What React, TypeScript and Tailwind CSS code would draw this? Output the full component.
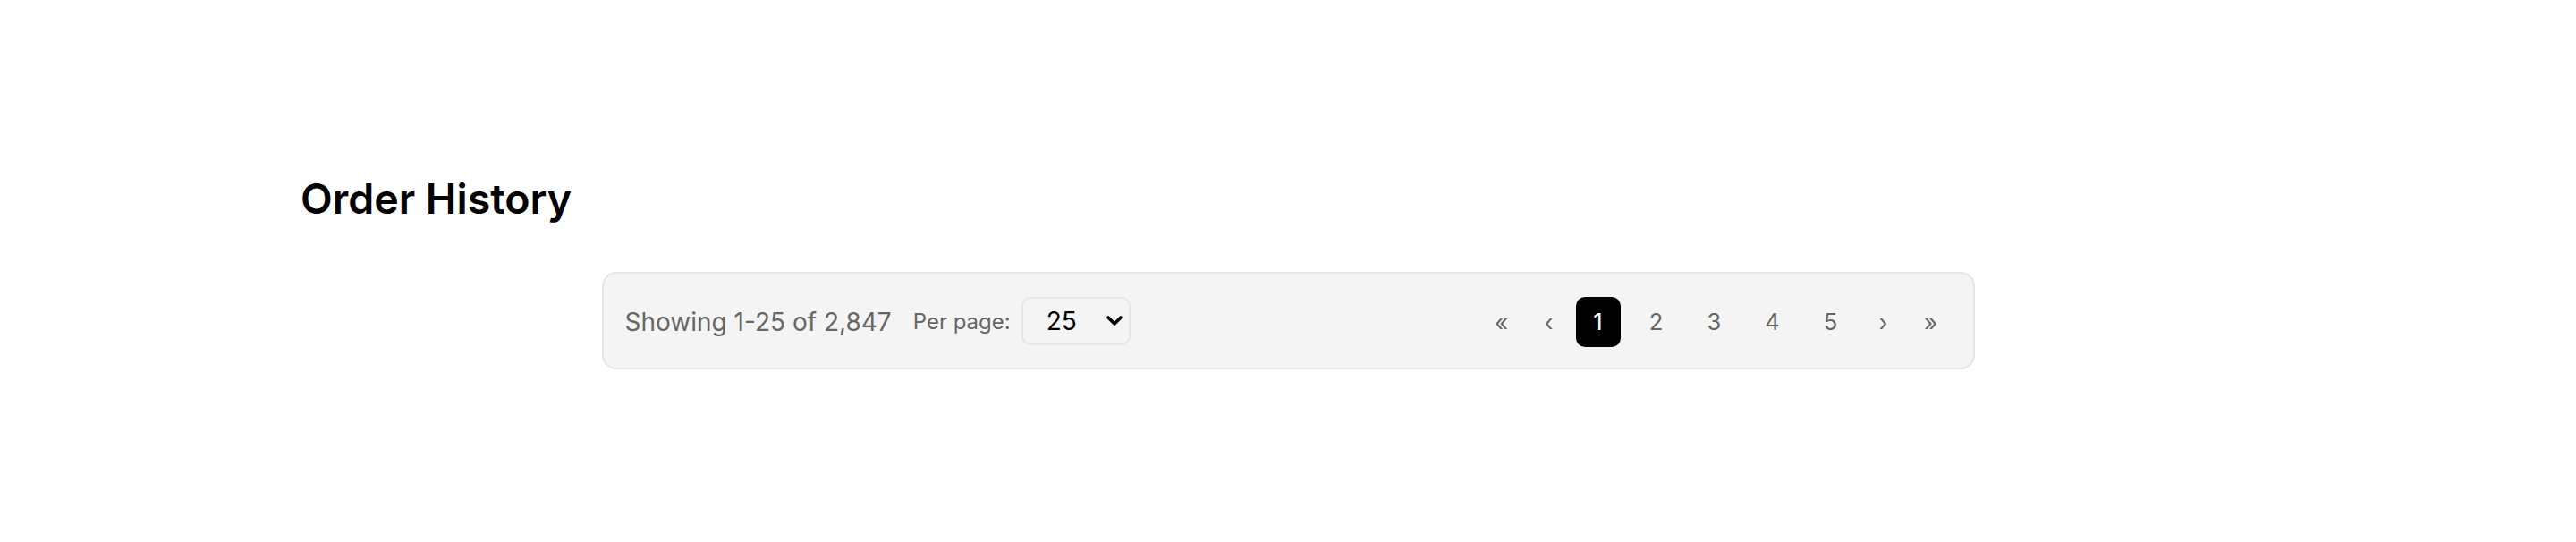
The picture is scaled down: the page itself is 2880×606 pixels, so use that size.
import React from "react";

export default function App() {
  const pages = [1, 2, 3, 4, 5];
  return (
    <div className="min-h-screen bg-white" style={{ fontFamily: "Inter, 'Noto Sans', sans-serif" }}>
      <div className="pt-[196px] pl-[336px]">
        <h1 className="text-[46.5px] font-semibold leading-[52px] text-black">Order History</h1>
      </div>
      <div className="mx-auto mt-[56px] flex h-[109px] w-[1535px] items-center justify-between rounded-[16px] border-2 border-[#e6e6e6] bg-[#f4f4f4] pl-[24px] pr-[28px] pt-[3px]">
        <div className="flex items-center">
          <span className="text-[28px] text-[#666666]">Showing 1-25 of 2,847</span>
          <span className="ml-[24px] text-[24px] text-[#666666]">Per page:</span>
          <div className="relative ml-[12px] -mt-[3px]">
            <select
              defaultValue="25"
              className="h-[54px] w-[122px] appearance-none rounded-[10px] border-2 border-[#e6e6e6] bg-transparent pl-[26px] pr-[6px] text-[28px] text-black outline-none"
              style={{ fontFamily: "Inter, sans-serif" }}
            >
              <option value="10">10</option>
              <option value="25">25</option>
              <option value="50">50</option>
              <option value="100">100</option>
            </select>
            <svg
              className="pointer-events-none absolute right-[8px] top-[20px]"
              width="20"
              height="13"
              viewBox="0 0 20 13"
              fill="none"
            >
              <path d="M3 3 L10 10 L17 3" stroke="#000" strokeWidth="3.6" strokeLinecap="round" strokeLinejoin="round" />
            </svg>
          </div>
        </div>
        <div className="flex items-center gap-[15px]">
          <button className="h-[56px] w-[38px] text-[26px] text-[#666666]">«</button>
          <button className="-mr-[4px] h-[56px] w-[38px] text-[26px] text-[#666666]">‹</button>
          {pages.map((p) => (
            <button
              key={p}
              className={
                p === 1
                  ? "h-[56px] w-[50px] rounded-[10px] bg-black text-[25.5px] text-white"
                  : "h-[56px] w-[50px] rounded-[10px] text-[25.5px] text-[#666666]"
              }
            >
              {p}
            </button>
          ))}
          <button className="h-[56px] w-[38px] text-[26px] text-[#666666]">›</button>
          <button className="h-[56px] w-[38px] text-[26px] text-[#666666]">»</button>
        </div>
      </div>
    </div>
  );
}
